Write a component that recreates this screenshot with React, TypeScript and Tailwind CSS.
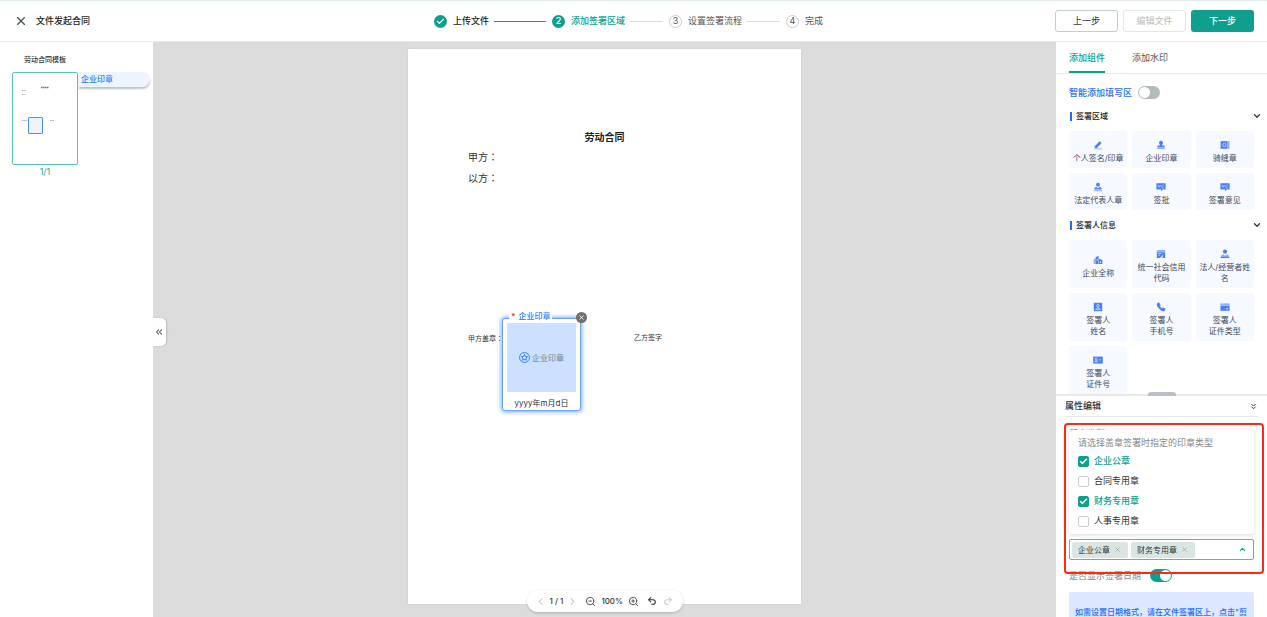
import React from "react";
import {
  Check,
  ChevronDown,
  ChevronLeft,
  ChevronRight,
  ChevronsDown,
  ChevronsLeft,
  ChevronUp,
  Redo2,
  Undo2,
  X,
  ZoomIn,
  ZoomOut,
} from "lucide-react";

type Field = {
  icon: keyof typeof ICONS;
  lines: string[];
};

const LIGHT = "#8fb2fb";
const BLUE = "#4a80f7";

const ICONS = {
  pen: (
    <>
      <path d="M1.8 6.2 6.6 1.2 8.6 3 3.8 8H1.8Z" fill={BLUE} />
      <path d="M1 8.4H9V9.3H1Z" fill={LIGHT} />
    </>
  ),
  stamp: (
    <>
      <path d="M5 .8A2 2 0 0 1 6.4 4.2L6.1 5.4H8.6V7.4H1.4V5.4H3.9L3.6 4.2A2 2 0 0 1 5 .8Z" fill={BLUE} />
      <path d="M1.2 8H8.8V9.1H1.2Z" fill={LIGHT} />
    </>
  ),
  seam: (
    <>
      <path d="M.6 1.2H7.6V8.8H.6Z" fill={BLUE} />
      <path d="M7.9 1.2H9.5V8.8H7.9Z" fill={LIGHT} />
      <circle cx="4.4" cy="5" r="1.7" fill="none" stroke="#cfdeff" strokeWidth=".8" />
    </>
  ),
  legal: (
    <>
      <circle cx="5" cy="2.8" r="2" fill={BLUE} />
      <path d="M1.2 7.6C1.2 5.8 2.6 5 3.6 5L5 6.6 6.4 5C7.4 5 8.8 5.8 8.8 7.6Z" fill={BLUE} />
      <path d="M.8 8.2H9.2V9.2H.8Z" fill={LIGHT} />
    </>
  ),
  note: (
    <>
      <path d="M.4 1.2H9.6V7.6H6.6L5 9.4V7.600H.4Z" fill={BLUE} />
      <path d="M1.6 3 3.2 5.4 4.2 3 5.6 5 7.8 2.600M5.600 6H8.2" fill="none" stroke="#cfdeff" strokeWidth=".7" />
    </>
  ),
  building: (
    <>
      <path d="M.6 4.2 2.6 3.4V9H.6Z" fill={LIGHT} />
      <path d="M2.6 2.2 5.6.8V9H2.6Z" fill={BLUE} />
      <path d="M6 3.8 9.4 5V9H6Z" fill={BLUE} />
      <path d="M3.7 4.2H4.6V5.4H3.7ZM7.2 6.2H8V8H7.2Z" fill="#fff" />
    </>
  ),
  code: (
    <>
      <path d="M.8 1H9.2V3H.8Z" fill={LIGHT} />
      <path d="M.8 3.2H9.2V9H6.2L7.4 5.6 4 9H.8Z" fill={BLUE} />
      <path d="M2 4.6H5.4M2 6.2H4" stroke="#cfdeff" strokeWidth=".7" />
    </>
  ),
  person: (
    <>
      <circle cx="5" cy="2.6" r="2.100" fill={BLUE} />
      <path d="M.8 8.6C.8 6.4 2.4 5.2 3.6 5.2L5 7 6.4 5.2C7.6 5.2 9.2 6.4 9.2 8.6Z" fill={LIGHT} />
      <path d="M.8 7.8H9.2V9H.8Z" fill={BLUE} />
    </>
  ),
  portrait: (
    <>
      <path d="M.8.8H9.2V9.2H.8Z" fill={BLUE} />
      <circle cx="5" cy="3.8" r="1.3" fill="none" stroke="#dfe9ff" strokeWidth=".7" />
      <path d="M2.8 7.6C2.8 5.6 7.2 5.6 7.2 7.6Z" fill="none" stroke="#dfe9ff" strokeWidth=".7" />
    </>
  ),
  phone: (
    <path
      d="M1 1.4 2.4.6C2.900.4 3.3.6 3.5 1L4.500 2.800C4.700 3.300 4.400 3.600 3.700 4.100 4.200 5.100 4.900 5.900 5.900 6.400 6.500 5.700 6.800 5.400 7.300 5.600L9.100 6.500C9.500 6.700 9.600 7.100 9.400 7.500L8.600 8.900C8 9.600 6 9.500 3.700 7.300 1 4.700.2 2.400 1 1.400Z"
      fill={BLUE}
    />
  ),
  card: (
    <>
      <path d="M.4 1.4H9.6V3.8H.4Z" fill={LIGHT} />
      <path d="M.4 4H9.6V8.8H.4Z" fill={BLUE} />
      <path d="M6 6.8H8.2" stroke="#fff" strokeWidth=".8" />
    </>
  ),
  idcard: (
    <>
      <path d="M.2 1.6H9.8V8.6H.2Z" fill={BLUE} />
      <circle cx="3.2" cy="4" r=".9" fill="none" stroke="#dfe9ff" strokeWidth=".6" />
      <path d="M1.8 6.8C1.8 5.2 4.6 5.2 4.6 6.8ZM5.8 4.800H8.2" fill="none" stroke="#dfe9ff" strokeWidth=".7" />
    </>
  ),
};

const signFields: Field[] = [
  { icon: "pen", lines: ["个人签名/印章"] },
  { icon: "stamp", lines: ["企业印章"] },
  { icon: "seam", lines: ["骑缝章"] },
  { icon: "legal", lines: ["法定代表人章"] },
  { icon: "note", lines: ["签批"] },
  { icon: "note", lines: ["签署意见"] },
];

const signerFields: Field[] = [
  { icon: "building", lines: ["企业全称"] },
  { icon: "code", lines: ["统一社会信用", "代码"] },
  { icon: "person", lines: ["法人/经营者姓", "名"] },
  { icon: "portrait", lines: ["签署人", "姓名"] },
  { icon: "phone", lines: ["签署人", "手机号"] },
  { icon: "card", lines: ["签署人", "证件类型"] },
  { icon: "idcard", lines: ["签署人", "证件号"] },
];

const sealTypes = [
  { name: "企业公章", checked: true },
  { name: "合同专用章", checked: false },
  { name: "财务专用章", checked: true },
  { name: "人事专用章", checked: false },
];

function Header() {
  return (
    <header className="flex h-[42px] shrink-0 items-center border-y border-t-[#e3ebe9] border-b-[#e9e9e9] pl-[3px] pr-[13px]">
      <div className="flex flex-1 items-center gap-2">
        <button type="button" aria-label="关闭" className="ml-[11px] text-[#3f5550]">
          <X size={14} strokeWidth={2} />
        </button>
        <h1 className="text-[9px] font-medium text-[#222]">文件发起合同</h1>
      </div>

      <ol className="flex items-center text-[9px] whitespace-nowrap text-[#555]">
        <li className="flex items-center gap-1.5 font-medium text-[#222]">
          <span className="flex size-[13px] items-center justify-center rounded-full bg-[#0e9f8e] text-white">
            <Check size={9} strokeWidth={3} />
          </span>
          上传文件
        </li>
        <li className="ml-[5px] mr-1.5 h-px w-[52px] bg-[#0e9f8e]" />
        <li className="flex items-center gap-1.5 font-medium text-[#0e9f8e]">
          <span className="flex size-[13px] items-center justify-center rounded-full bg-[#0e9f8e] text-white">2</span>
          添加签署区域
        </li>
        <li className="ml-[5px] mr-1.5 h-px w-[33px] bg-[#dcdcdc]" />
        <li className="flex items-center gap-1.5">
          <span className="flex size-[13px] items-center justify-center rounded-full border border-[#ccc]">3</span>
          设置签署流程
        </li>
        <li className="ml-[5px] mr-1.5 h-px w-[33px] bg-[#dcdcdc]" />
        <li className="flex items-center gap-1.5">
          <span className="flex size-[13px] items-center justify-center rounded-full border border-[#ccc]">4</span>
          完成
        </li>
      </ol>

      <div className="flex flex-1 justify-end gap-[5px] text-[9px]">
        <button type="button" className="h-[22px] w-[63px] rounded-[3px] border border-[#c8cccb] text-[#333]">
          上一步
        </button>
        <button type="button" disabled className="h-[22px] w-[63px] rounded-[3px] border border-[#e4e7e6] text-[#bbb]">
          编辑文件
        </button>
        <button type="button" className="h-[22px] w-[63px] rounded-[3px] bg-[#0e9f8e] font-medium text-white">
          下一步
        </button>
      </div>
    </header>
  );
}

function Thumbnails() {
  return (
    <aside className="w-[153px] shrink-0 bg-white pl-3 pt-3">
      <h2 className="w-[66px] text-center text-[7px] leading-[12px] font-medium text-[#333]">劳动合同模板</h2>
      <div className="mt-1.5 flex items-start gap-px">
        <div className="relative h-[93px] w-[66px] rounded-[2px] border border-[#57c4b7]">
          <svg viewBox="0 0 64 91" className="block size-full">
            <path d="M28 14.5H35.5" stroke="#777" strokeWidth="1.5" strokeDasharray="1.6 .4" />
            <path
              d="M9 17.5H13M9 21.5H12.5M9 47.5H14.500M37 47.5H41"
              stroke="#999"
              strokeWidth=".8"
              strokeDasharray="1.200 .4"
            />
          </svg>
          <span className="absolute left-[15px] top-11 h-[17px] w-[15px] rounded-[1px] border border-[#4f8ef7] bg-[#eef4ff]" />
        </div>
        <span className="h-[15px] w-[71px] rounded-r-full bg-[#edf4ff] pl-[2px] text-[8px] leading-[15px] font-medium text-[#2d7bff] shadow-[0_2px_2px_rgba(0,0,0,0.25)]">
          企业印章
        </span>
      </div>
      <p className="w-[66px] text-center text-[9px] leading-[14px] text-[#2aa897]">1/1</p>
    </aside>
  );
}

function SealField() {
  return (
    <div className="absolute left-[94px] top-[269px] h-[93px] w-[79px] rounded-[3px] border border-[#6aa5ff] bg-white px-1 pt-1 shadow-[0_0_4px_1px_#79adff]">
      <div className="flex h-[69px] items-center justify-center gap-[2px] bg-[#cce0ff] text-[8px] text-[#6c8794]">
        <svg viewBox="0 0 24 24" className="size-[11px]" fill="none" stroke="#2d7bff" strokeWidth="2">
          <circle cx="12" cy="12" r="10.8" />
          <path d="m12 5.500 2 4.300 4.600.5-3.400 3.200.9 4.600L12 15.800l-4.100 2.300.9-4.600-3.400-3.200 4.600-.5Z" />
        </svg>
        企业印章
      </div>
      <p className="pt-1 text-center text-[8px] leading-[14px] whitespace-nowrap text-[#333]">yyyy年m月d日</p>
      <span className="absolute -top-[8px] left-[6px] flex gap-[3px] bg-white px-[2px] text-[8px] leading-[11px] font-medium whitespace-nowrap text-[#2d7bff]">
        <b className="text-[#f03a3a]">*</b>
        企业印章
      </span>
      <button
        type="button"
        aria-label="删除印章"
        className="absolute -right-[7px] -top-[7px] flex size-[11px] items-center justify-center rounded-full bg-[#707070] text-white"
      >
        <X size={7} strokeWidth={3} />
      </button>
    </div>
  );
}

// the contract body sets its colons in the middle of the em box
function Colon() {
  return <span className="font-['Noto_Sans_CJK_TC']">：</span>;
}

function Viewer() {
  return (
    <main className="relative flex min-w-0 flex-1 flex-col items-center bg-[#dcdcdc] pt-[7px]">
      <article className="relative h-[555px] w-[393px] shrink-0 bg-white px-[60px] pt-20 text-[10px] text-[#333] shadow-[0_0_2px_rgba(0,0,0,0.1)]">
        <h2 className="text-center leading-[16px] font-bold text-[#222]">劳动合同</h2>
        <p className="mt-[3px] leading-[18px]">
          甲方
          <Colon />
        </p>
        <p className="mt-[3px] leading-[18px]">
          以方
          <Colon />
        </p>
        <div className="mt-[145px] flex gap-[134px] text-[7px] leading-[12px]">
          <p className="w-8 whitespace-nowrap">
            甲方盖章
            <Colon />
          </p>
          <p>乙方签字</p>
        </div>
        <SealField />
      </article>

      <button
        type="button"
        aria-label="收起缩略图"
        className="absolute left-0 top-[276px] flex h-[28px] w-[13px] items-center justify-center rounded-r-[5px] bg-white pr-[2px] text-[#555] shadow-[1px_0_2px_rgba(0,0,0,0.15)]"
      >
        <ChevronsLeft size={10} strokeWidth={2.5} />
      </button>

      <div className="absolute bottom-[5px] flex h-[22px] w-[156px] items-center rounded-full bg-white px-2 text-[8px] font-medium whitespace-nowrap text-[#333] shadow-[0_1px_3px_rgba(0,0,0,0.2)]">
        <button type="button" aria-label="上一页" className="text-[#aaa]">
          <ChevronLeft size={11} />
        </button>
        <span className="px-1">1 / 1</span>
        <button type="button" aria-label="下一页" className="text-[#aaa]">
          <ChevronRight size={11} />
        </button>
        <button type="button" aria-label="缩小" className="ml-[7px] text-[#444]">
          <ZoomOut size={11} />
        </button>
        <span className="px-[5px]">100%</span>
        <button type="button" aria-label="放大" className="text-[#444]">
          <ZoomIn size={11} />
        </button>
        <button type="button" aria-label="撤销" className="ml-2 text-[#333]">
          <Undo2 size={10} strokeWidth={2.5} />
        </button>
        <button type="button" aria-label="重做" disabled className="ml-1.5 text-[#ccc]">
          <Redo2 size={10} strokeWidth={2.5} />
        </button>
      </div>
    </main>
  );
}

function Toggle({ id, on }: { id: string; on: boolean }) {
  return (
    <input
      id={id}
      type="checkbox"
      role="switch"
      defaultChecked={on}
      className="h-[13px] w-[22px] shrink-0 appearance-none rounded-full bg-[#b2bcb9] p-px before:block before:size-[11px] before:rounded-full before:bg-white checked:bg-[#0e9f8e] checked:before:ml-[9px]"
    />
  );
}

function FieldGroup({ title, fields, tall }: { title: string; fields: Field[]; tall?: boolean }) {
  return (
    <section>
      <div className="flex h-[14px] items-center justify-between">
        <h3 className="flex items-center gap-1 text-[8px] font-medium text-[#222]">
          <span className="ml-px h-[9px] w-[2px] bg-[#1f6bff]" />
          {title}
        </h3>
        <button type="button" aria-label={`收起${title}`} className="-mr-2 text-[#333]">
          <ChevronDown size={10} strokeWidth={3} />
        </button>
      </div>
      <div className="mt-2 grid grid-cols-3 gap-[5px]">
        {fields.map((field, i) => (
          <button
            key={i}
            type="button"
            className={`flex flex-col items-center justify-center gap-[3px] rounded-[2px] bg-[#f6f9ff] pt-[5px] text-[8px] leading-[11px] whitespace-nowrap text-[#3f4a5c] ${
              tall ? "h-[48px]" : "h-[37px]"
            }`}
          >
            <svg viewBox="0 0 10 10" className="size-[10px] shrink-0">
              {ICONS[field.icon]}
            </svg>
            <span>
              {field.lines.map((line) => (
                <span key={line} className="block">
                  {line}
                </span>
              ))}
            </span>
          </button>
        ))}
      </div>
    </section>
  );
}

function SealTypeSelect() {
  return (
    <div className="relative flex h-[21px] items-center gap-[3px] rounded-[2px] border border-[#57b8ac] bg-white pl-[2px] pr-1.5 text-[8px]">
      {sealTypes
        .filter((seal) => seal.checked)
        .map((seal) => (
          <span
            key={seal.name}
            className="flex h-4 items-center gap-1 rounded-[2px] bg-[#dbe6e3] pl-1.5 pr-[7px] whitespace-nowrap text-[#333]"
          >
            {seal.name}
            <button type="button" aria-label={`移除${seal.name}`} className="text-[#94a3a0]">
              <X size={7} strokeWidth={2.5} />
            </button>
          </span>
        ))}
      <button type="button" aria-label="收起选项" className="ml-auto text-[#0e9f8e]">
        <ChevronUp size={9} strokeWidth={3} />
      </button>

      <div
        role="group"
        aria-label="印章类型"
        className="absolute -inset-x-px bottom-full mb-[6px] rounded-[3px] bg-white px-[9px] pt-1 pb-[3px] text-[9px] shadow-[0_1px_4px_rgba(0,0,0,0.15)]"
      >
        <p className="h-[17px] leading-[18px] whitespace-nowrap text-[#888]">请选择盖章签署时指定的印章类型</p>
        {sealTypes.map((seal) => (
          <label
            key={seal.name}
            className="flex h-5 items-center gap-[5px] text-[#333] has-checked:font-medium has-checked:text-[#0e9f8e]"
          >
            <span className="grid size-[11px] place-items-center">
              <input
                type="checkbox"
                defaultChecked={seal.checked}
                className="peer col-start-1 row-start-1 size-[11px] appearance-none rounded-[2px] border border-[#ccc] checked:border-[#0e9f8e] checked:bg-[#0e9f8e]"
              />
              <Check
                size={9}
                strokeWidth={4}
                className="pointer-events-none invisible col-start-1 row-start-1 text-white peer-checked:visible"
              />
            </span>
            {seal.name}
          </label>
        ))}
      </div>
    </div>
  );
}

function Properties() {
  return (
    <section className="relative h-[223px] shrink-0 border-t-2 border-[#e6e8e9] bg-white">
      <span className="absolute -top-1 left-1/2 h-1 w-7 -translate-x-1/2 rounded-t-[3px] bg-[#b9bec8]" />
      <div className="mx-[9px] flex h-[21px] items-center justify-between border-b border-[#e6e6e6]">
        <h2 className="text-[9px] font-medium text-[#333]">属性编辑</h2>
        <button type="button" aria-label="收起属性" className="text-[#333]">
          <ChevronsDown size={9} strokeWidth={2.5} />
        </button>
      </div>

      <div className="h-[200px] overflow-hidden px-[13px] pt-[11px]">
        <p className="mb-[99px] h-3 text-[9px] leading-[12px] text-[#888]">印章类型</p>
        <SealTypeSelect />
        <div className="mt-[9px] flex h-[13px] items-center gap-[9px]">
          <label htmlFor="show-date" className="text-[9px] text-[#888]">
            是否显示签署日期
          </label>
          <Toggle id="show-date" on />
        </div>
        <p className="mt-[10px] rounded-[2px] bg-[#dce8ff] px-1.5 py-[14px] text-[8px] leading-[12px] font-medium text-[#1f6bff]">
          如需设置日期格式，请在文件签署区上，点击"剪
        </p>
      </div>

      <div className="pointer-events-none absolute left-2 right-[3px] top-[27px] h-[151px] rounded-[4px] border-2 border-[#fb2a12]" />
    </section>
  );
}

function Sidebar() {
  return (
    <aside className="flex w-[211px] shrink-0 flex-col bg-white">
      <nav className="flex h-[32px] shrink-0 gap-[27px] border-b border-[#e6e8e9] px-[13px] text-[9px]">
        <button type="button" className="border-b-2 border-[#0e9f8e] pt-[2px] font-medium text-[#0e9f8e]">
          添加组件
        </button>
        <button type="button" className="border-b-2 border-transparent pt-[2px] text-[#555]">
          添加水印
        </button>
      </nav>

      <div className="flex min-h-0 flex-1 flex-col gap-2 overflow-hidden px-[13px]">
        <div className="mt-3 mb-[2px] flex h-[13px] items-center gap-[6px]">
          <label htmlFor="smart-fill" className="text-[9px] font-medium text-[#1f6bff]">
            智能添加填写区
          </label>
          <Toggle id="smart-fill" on={false} />
        </div>
        <FieldGroup title="签署区域" fields={signFields} />
        <FieldGroup title="签署人信息" fields={signerFields} tall />
      </div>

      <Properties />
    </aside>
  );
}

export default function App() {
  return (
    <div className="flex h-screen flex-col overflow-hidden bg-white font-[Inter,'Noto_Sans_CJK_SC',sans-serif]">
      <Header />
      <div className="flex min-h-0 flex-1">
        <Thumbnails />
        <Viewer />
        <Sidebar />
      </div>
    </div>
  );
}
